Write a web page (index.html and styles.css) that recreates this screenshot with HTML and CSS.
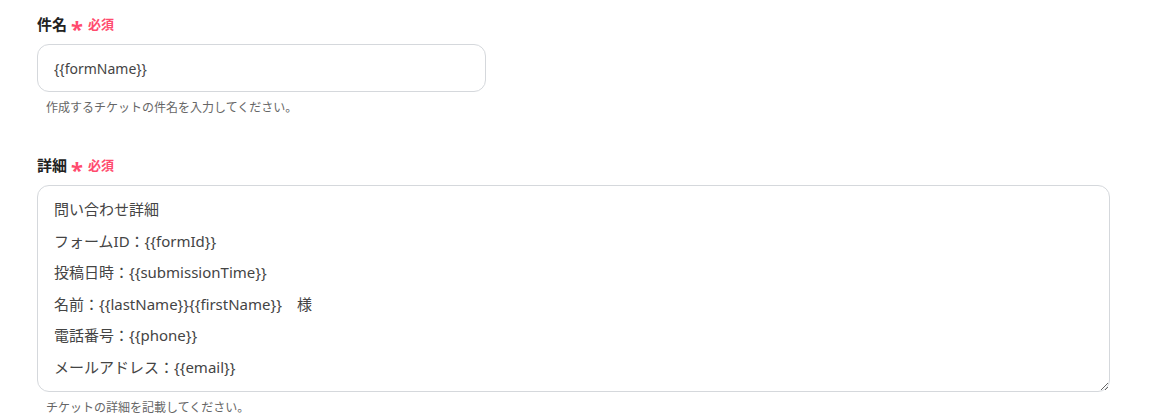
FILE: index.html
```html
<!DOCTYPE html>
<html lang="ja">
<head>
<meta charset="utf-8">
<link rel="stylesheet" href="styles.css">
</head>
<body>
<div class="form">
  <div class="field">
    <div class="label"><span class="label-text">件名</span><span class="req-star">*</span><span class="req">必須</span></div>
    <input class="input" type="text" value="{{formName}}">
    <div class="help">作成するチケットの件名を入力してください。</div>
  </div>
  <div class="field field-detail">
    <div class="label"><span class="label-text">詳細</span><span class="req-star">*</span><span class="req">必須</span></div>
    <textarea class="textarea">問い合わせ詳細
フォームID：{{formId}}
投稿日時：{{submissionTime}}
名前：{{lastName}}{{firstName}}　様
電話番号：{{phone}}
メールアドレス：{{email}}</textarea>
    <div class="help">チケットの詳細を記載してください。</div>
  </div>
</div>
</body>
</html>
```
FILE: styles.css
```css
html, body {
  margin: 0;
  padding: 0;
  background: #ffffff;
}
body {
  font-family: "Noto Sans", "Noto Sans CJK JP", sans-serif;
  color: #333;
}
.form {
  padding: 12px 0 0 37px;
  display: flex;
  flex-direction: column;
  gap: 37px;
}
.field {
  display: flex;
  flex-direction: column;
}
.label {
  display: flex;
  align-items: center;
  height: 22px;
  margin-bottom: 10px;
}
.label-text {
  font-size: 15px;
  font-weight: 700;
  color: #222;
}
.req-star {
  color: #ff4b6e;
  font-size: 22px;
  font-weight: 700;
  margin-left: 4px;
  line-height: 1;
  position: relative;
  top: 5px;
}
.req {
  color: #ff4b6e;
  font-size: 13px;
  font-weight: 700;
  margin-left: 5px;
}
.input {
  box-sizing: border-box;
  width: 449px;
  height: 48px;
  border: 1px solid #d5d8dc;
  border-radius: 12px;
  padding: 0 16px;
  font-family: "Noto Sans", "Noto Sans CJK JP", sans-serif;
  font-size: 14px;
  color: #444;
  outline: none;
}
.help {
  font-size: 12px;
  color: #666;
  margin-top: 6px;
  padding-left: 9px;
}
.textarea {
  box-sizing: border-box;
  width: 1073px;
  height: 207px;
  border: 1px solid #d5d8dc;
  border-radius: 12px;
  padding: 8px 16px;
  font-family: "Noto Sans", "Noto Sans CJK JP", sans-serif;
  font-size: 15px;
  line-height: 31.6px;
  color: #444;
  outline: none;
  resize: vertical;
  overflow: hidden;
}
```
